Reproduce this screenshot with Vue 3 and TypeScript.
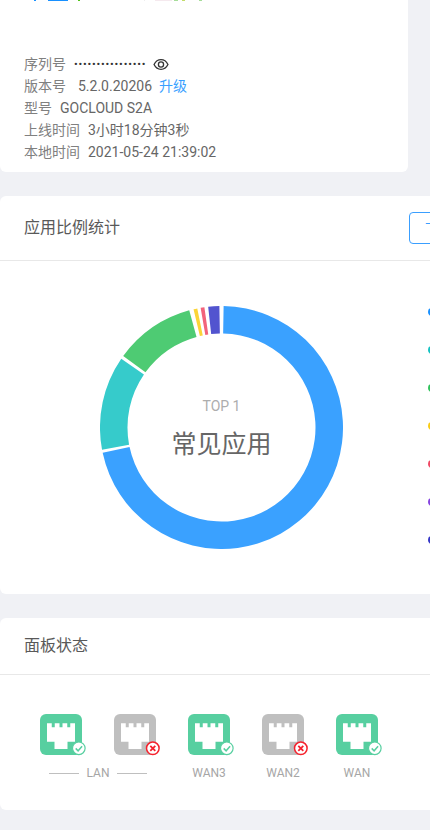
<script setup lang="ts">
interface Segment { from: number; to: number; color: string }
interface Port { name: string; up: boolean }

const slivers = [
  { left: 34, width: 2, color: '#1890ff' },
  { left: 12, width: 20, color: '#1890ff' },
  { left: 10, width: 2, color: '#52c41a' },
  { left: 64, width: 1, color: '#eeeeee' },
  { left: 10, width: 17, color: '#f5e9ee' },
  { left: 2, width: 4, color: '#a6dd9a' },
  { left: 4, width: 3, color: '#c3dc6a' },
  { left: 14, width: 3, color: '#a6dd9a' }
]

const basicInfo = [
  { label: '型号', value: 'GOCLOUD S2A' },
  { label: '上线时间', value: '3小时18分钟3秒' },
  { label: '本地时间', value: '2021-05-24 21:39:02' }
]

const segments: Segment[] = [
  { from: 1, to: 258, color: '#3aa1ff' },
  { from: 259.5, to: 304.4, color: '#36cbcb' },
  { from: 306, to: 344.6, color: '#4ecb73' },
  { from: 346.7, to: 348.5, color: '#fbd437' },
  { from: 350.1, to: 351.9, color: '#f2637b' },
  { from: 353.7, to: 359, color: '#5254cf' }
]

const legendColors = ['#1890ff', '#13c2c2', '#2fc25b', '#facc14', '#f04864', '#8543e0', '#3436c7']

const ports: Port[] = [
  { name: 'LAN1', up: true },
  { name: 'LAN2', up: false },
  { name: 'WAN3', up: true },
  { name: 'WAN2', up: false },
  { name: 'WAN', up: true }
]

const wanLabels = ['WAN3', 'WAN2', 'WAN']

const CX = 121.5
const CY = 121.5
const OUTER = 121.5
const INNER = 94

function point(r: number, deg: number): string {
  const a = (deg * Math.PI) / 180
  return `${(CX + r * Math.sin(a)).toFixed(2)} ${(CY - r * Math.cos(a)).toFixed(2)}`
}

function arc(s: Segment): string {
  const large = s.to - s.from > 180 ? 1 : 0
  return `M${point(OUTER, s.from)} A${OUTER} ${OUTER} 0 ${large} 1 ${point(OUTER, s.to)} L${point(INNER, s.to)} A${INNER} ${INNER} 0 ${large} 0 ${point(INNER, s.from)} Z`
}
</script>

<template>
  <div class="page">
    <section class="card info-card">
      <div class="slivers" aria-hidden="true">
        <span
          v-for="(s, i) in slivers"
          :key="i"
          class="sliver"
          :style="{ marginLeft: s.left + 'px', width: s.width + 'px', background: s.color }"
        ></span>
      </div>
      <div class="info-list">
        <div class="info-row">
          <span class="label">序列号</span>
          <span class="mask">••••••••••••••••</span>
          <svg class="eye" width="16" height="13" viewBox="0 0 18 14" fill="none" stroke="#333" stroke-width="1.5">
            <path d="M1.2 7C3 3.4 5.7 1.6 9 1.6S15 3.4 16.8 7C15 10.6 12.3 12.4 9 12.4S3 10.6 1.2 7Z" />
            <circle cx="9" cy="7" r="2.9" />
          </svg>
        </div>
        <div class="info-row">
          <span class="label">版本号</span>
          <span class="value version">5.2.0.20206</span>
          <a class="link">升级</a>
        </div>
        <div v-for="row in basicInfo" :key="row.label" class="info-row">
          <span class="label">{{ row.label }}</span>
          <span class="value">{{ row.value }}</span>
        </div>
      </div>
    </section>

    <section class="card wide">
      <header class="card-head">
        <h2 class="title">应用比例统计</h2>
        <button class="outline-btn" type="button">下载</button>
      </header>
      <div class="chart-body">
        <div class="donut">
          <svg width="243" height="243" viewBox="0 0 243 243">
            <path v-for="s in segments" :key="s.from" :d="arc(s)" :fill="s.color" />
          </svg>
          <div class="donut-center">
            <span class="top-label">TOP 1</span>
            <span class="top-name">常见应用</span>
          </div>
        </div>
        <ul class="legend">
          <li v-for="c in legendColors" :key="c" class="dot" :style="{ background: c }"></li>
        </ul>
      </div>
    </section>

    <section class="card wide">
      <header class="card-head">
        <h2 class="title">面板状态</h2>
      </header>
      <div class="ports">
        <svg
          v-for="p in ports"
          :key="p.name"
          class="port-icon"
          width="42"
          height="41"
          viewBox="0 0 42 41"
        >
          <rect width="42" height="41" rx="6" :fill="p.up ? '#57cfa0' : '#bfbfbf'" />
          <path
            fill="#fff"
            d="M7 9.3H11.75V13.3H14.75V9.3H19.5V13.3H22.5V9.3H27.25V13.3H30.25V9.3H35V27.7H27.5V35H14.5V27.7H7Z"
          />
          <circle
            cx="38.8"
            cy="34.3"
            r="6.3"
            fill="#fff"
            :stroke="p.up ? '#57cfa0' : '#f5222d'"
            :stroke-width="p.up ? 1.2 : 1.5"
          />
          <path
            v-if="p.up"
            d="M35.7 34.4L38.1 36.8L42.1 32.3"
            fill="none"
            stroke="#57cfa0"
            stroke-width="1.5"
          />
          <path
            v-else
            d="M36.3 31.8L41.3 36.8M41.3 31.8L36.3 36.8"
            fill="none"
            stroke="#f5222d"
            stroke-width="1.8"
          />
        </svg>
        <div class="lan-label">
          <i class="rule"></i>
          <span>LAN</span>
          <i class="rule"></i>
        </div>
        <span v-for="name in wanLabels" :key="name" class="port-label">{{ name }}</span>
      </div>
    </section>
  </div>
</template>

<style scoped>
.page {
  width: 430px;
  height: 830px;
  overflow: hidden;
  background: #f0f1f5;
  font-family: Roboto, "Noto Sans CJK SC", sans-serif;
  font-size: 14px;
  color: #666;
}
.card {
  background: #fff;
  border-radius: 6px;
  margin-bottom: 24px;
}
.info-card {
  width: 408px;
  border-radius: 0 0 6px 6px;
  padding: 0 24px 9px;
  box-sizing: border-box;
}
.wide {
  width: 800px;
}
.slivers {
  display: flex;
  height: 1px;
  margin-left: -24px;
  margin-bottom: 52px;
}
.sliver {
  display: block;
  height: 1px;
}
.info-row {
  display: flex;
  align-items: center;
  gap: 8px;
  height: 22px;
  line-height: 22px;
  white-space: nowrap;
}
.label {
  color: #808080;
}
.value {
  color: #666;
}
.version {
  margin-left: 4px;
  margin-right: -1px;
}
.link {
  color: #3a9fff;
}
.mask {
  color: #333;
  font-size: 11px;
  letter-spacing: 0.8px;
  margin-top: 2px;
  margin-right: -1px;
}
.eye {
  flex: none;
}
.card-head {
  display: flex;
  align-items: center;
  padding: 16px 24px;
  gap: 289px;
  border-bottom: 1px solid #e8e8e8;
}
.title {
  margin: 0;
  font-size: 16px;
  font-weight: 400;
  line-height: 24px;
  color: #595959;
  white-space: nowrap;
}
.outline-btn {
  height: 32px;
  width: 100px;
  padding: 0 0 0 15px;
  border: 1px solid #3a9fff;
  border-radius: 4px;
  background: #fff;
  color: #3a9fff;
  font: inherit;
  text-align: left;
}
.chart-body {
  display: flex;
  align-items: flex-start;
  gap: 85px;
  padding: 45px 0 45px 100px;
}
.donut {
  position: relative;
  width: 243px;
  height: 243px;
  flex: none;
}
.donut svg {
  display: block;
}
.donut-center {
  position: absolute;
  inset: 0;
  display: flex;
  flex-direction: column;
  align-items: center;
  padding-top: 90px;
  box-sizing: border-box;
}
.top-label {
  font-size: 14px;
  line-height: 20px;
  color: #adadad;
}
.top-name {
  margin-top: 13px;
  font-size: 25px;
  line-height: 32px;
  color: #666;
}
.legend {
  list-style: none;
  margin: 2px 0 0;
  padding: 0;
  display: flex;
  flex-direction: column;
  gap: 30px;
}
.dot {
  width: 8px;
  height: 8px;
  border-radius: 50%;
}
.ports {
  display: grid;
  grid-template-columns: repeat(5, 42px);
  column-gap: 32px;
  row-gap: 8px;
  padding: 39px 0 27px 40px;
}
.port-icon {
  display: block;
  overflow: visible;
}
.lan-label {
  grid-column: span 2;
  display: flex;
  align-items: center;
  justify-content: center;
  gap: 8px;
  height: 20px;
  font-size: 12px;
  color: #a6a6a6;
}
.rule {
  width: 30px;
  height: 1px;
  background: #bfbfbf;
}
.port-label {
  justify-self: center;
  height: 20px;
  line-height: 20px;
  font-size: 12px;
  color: #a6a6a6;
  white-space: nowrap;
}
</style>
